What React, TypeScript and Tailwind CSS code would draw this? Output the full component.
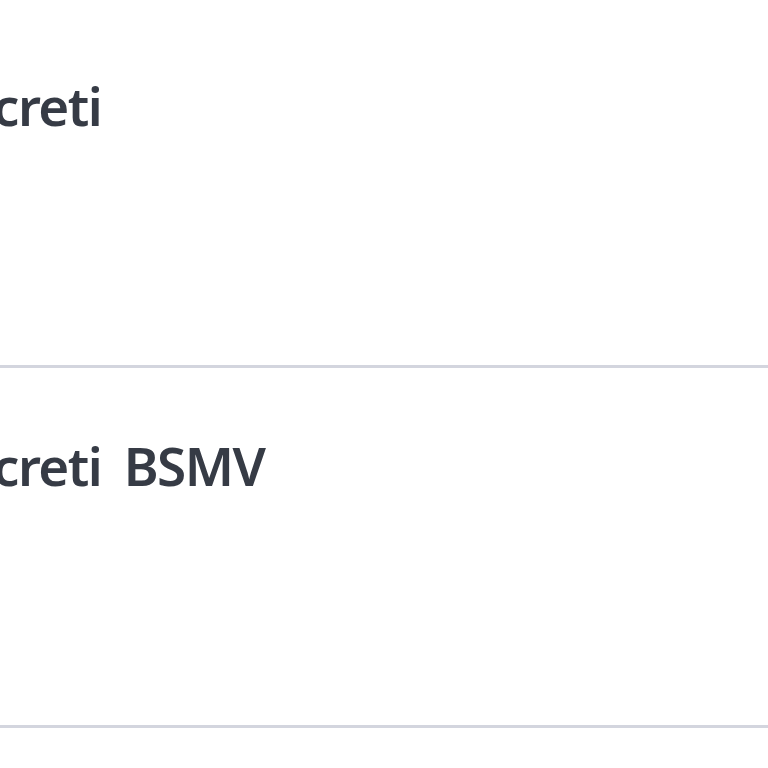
export default function App() {
  const rows = ["Decreti", "Decreti BSMV"];
  return (
    <div
      className="w-[768px] h-[768px] overflow-hidden bg-white"
      style={{ fontFamily: '"Noto Sans", "Open Sans", sans-serif' }}
    >
      <div className="h-[8px]" />
      {rows.map((t) => (
        <div
          key={t}
          className="h-[360px] border-b-[3px] border-[#d3d5de] pt-[71px] overflow-hidden"
        >
          <div className="ml-[-74px] whitespace-nowrap text-[53px] leading-[53px] tracking-[-1.5px] [word-spacing:10px] [font-variant-ligatures:none] font-semibold text-[#363b45]">
            {t}
          </div>
        </div>
      ))}
    </div>
  );
}
